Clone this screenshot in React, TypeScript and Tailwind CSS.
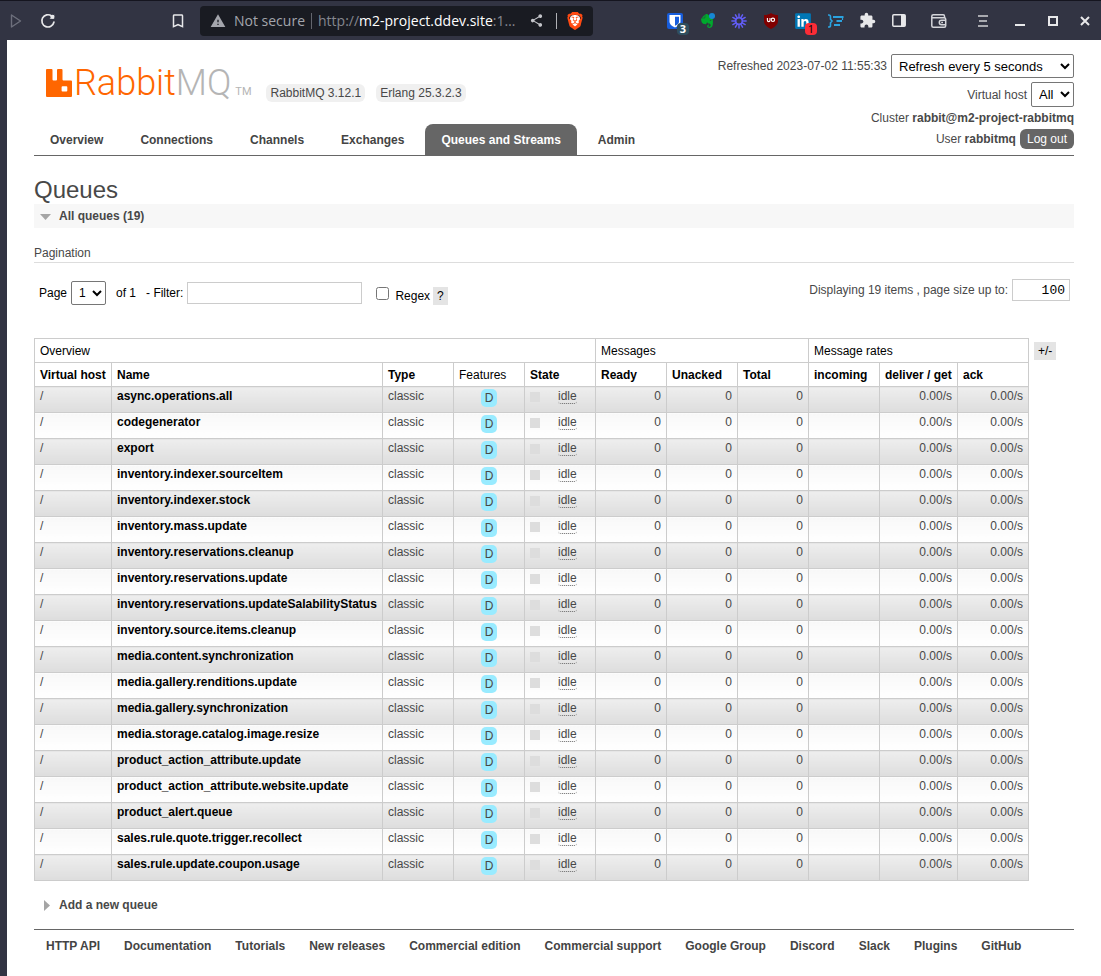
import type { ReactNode } from 'react'
import { MdBookmarkBorder, MdExtension, MdShare, MdWarning } from 'react-icons/md'
import { SiBrave, SiEvernote } from 'react-icons/si'
import { FaLinkedin } from 'react-icons/fa'

const tabs = ['Overview', 'Connections', 'Channels', 'Exchanges', 'Queues and Streams', 'Admin']

const queues = [
    'async.operations.all',
    'codegenerator',
    'export',
    'inventory.indexer.sourceItem',
    'inventory.indexer.stock',
    'inventory.mass.update',
    'inventory.reservations.cleanup',
    'inventory.reservations.update',
    'inventory.reservations.updateSalabilityStatus',
    'inventory.source.items.cleanup',
    'media.content.synchronization',
    'media.gallery.renditions.update',
    'media.gallery.synchronization',
    'media.storage.catalog.image.resize',
    'product_action_attribute.update',
    'product_action_attribute.website.update',
    'product_alert.queue',
    'sales.rule.quote.trigger.recollect',
    'sales.rule.update.coupon.usage',
]

const footerLinks = [
    'HTTP API',
    'Documentation',
    'Tutorials',
    'New releases',
    'Commercial edition',
    'Commercial support',
    'Google Group',
    'Discord',
    'Slack',
    'Plugins',
    'GitHub',
]

const spokes = [0, 30, 60, 90, 120, 150, 180, 210, 240, 270, 300, 330]

function BarButton({ label, className = 'w-8', children }: { label: string; className?: string; children: ReactNode }) {
    return (
        <button type="button" aria-label={label} className={`relative flex h-8 shrink-0 items-center justify-center ${className}`}>
            {children}
        </button>
    )
}

function BrowserBar() {
    return (
        <div className="flex h-10 items-center border-t border-[#15151f] bg-[#323443] text-[#e8e8ea]">
            <div className="flex w-[200px] shrink-0 items-center">
                <BarButton label="Forward">
                    <svg width="12" height="16" viewBox="0 0 12 16" fill="none" stroke="#6d6f7c" strokeWidth="1.4">
                        <path d="M1.5 2v12L10.5 8z" strokeLinejoin="round" />
                    </svg>
                </BarButton>
                <BarButton label="Reload">
                    <svg width="16" height="16" viewBox="0 0 16 16" fill="none" stroke="currentColor" strokeWidth="1.7">
                        <path d="M13.9 9.2A6.1 6.1 0 1 1 11.6 3" strokeLinecap="round" />
                        <path d="M9.6 5.8h4.6V1.6z" fill="currentColor" stroke="none" />
                        <circle cx="12.4" cy="3.8" r="2" fill="currentColor" stroke="none" />
                    </svg>
                </BarButton>
                <BarButton label="Bookmark" className="ml-auto mr-1.5 w-8">
                    <MdBookmarkBorder size={18} />
                </BarButton>
            </div>
            <div className="flex h-[30px] max-w-[393px] flex-1 items-center rounded bg-[#191b22] pl-2.5 font-['Open_Sans',sans-serif] text-[14px] whitespace-nowrap">
                <MdWarning size={16} className="mr-2 shrink-0 text-[#a3a5ac]" />
                <span className="text-[#a3a5ac]">Not secure</span>
                <span className="mx-1.5 h-4 w-px bg-[#63656d]" />
                <span className="text-[#85878f]">
                    http://<span className="text-white">m2-project.ddev.site</span>:1…
                </span>
                <button type="button" aria-label="Share" className="ml-auto text-[#c4c5ca]">
                    <MdShare size={15} />
                </button>
                <span className="mr-2 ml-3 h-4 w-px shrink-0 bg-[#b0b1b6]" />
                <button type="button" aria-label="Brave Shields" className="relative mr-2 flex w-5 items-center justify-center">
                    <span className="absolute h-3 w-2.5 rounded-sm bg-white" />
                    <SiBrave size={18} color="#ff4a12" className="relative" />
                </button>
            </div>
            <div className="ml-auto flex items-center">
                <BarButton label="Bitwarden">
                    <svg width="16" height="16" viewBox="0 0 16 16">
                        <rect width="16" height="16" rx="2" fill="#175ddc" />
                        <path d="M2.5 2h11v6.500c0 3-3 5-5.500 6-2.500-1-5.500-3-5.500-6z" fill="#fff" />
                        <path d="M8 3.700h4v5c0 1.600-1.800 3-4 4z" fill="#175ddc" />
                    </svg>
                    <span className="absolute right-0.5 bottom-0.5 h-3 w-3 rounded-sm bg-[#2f4f5f] text-center font-['Open_Sans',sans-serif] text-[11px] leading-3 font-bold text-white">
                        3
                    </span>
                </BarButton>
                <BarButton label="Evernote">
                    <SiEvernote size={14} color="#00a82d" />
                    <span className="absolute top-2 right-2 h-1.5 w-1.5 rounded-full bg-[#1788d4]" />
                </BarButton>
                <BarButton label="Loom">
                    <svg width="16" height="16" viewBox="0 0 16 16" stroke="#625df5" strokeWidth="1.5" strokeLinecap="round">
                        {spokes.map((angle) => (
                            <path key={angle} d="M8 .9v3.600" transform={`rotate(${angle} 8 8)`} />
                        ))}
                        <circle cx="8" cy="8" r="3.300" fill="none" strokeWidth="1.600" />
                    </svg>
                </BarButton>
                <BarButton label="uBlock Origin">
                    <svg width="14" height="16" viewBox="0 0 14 16">
                        <path d="M7 0c2 1.500 4 2 7 2v6c0 3.500-3 6-7 8-4-2-7-4.500-7-8V2c3 0 5-.5 7-2z" fill="#800000" />
                        <path d="M3.400 5v2.300a1.300 1.300 0 0 0 2.600 0V5" fill="none" stroke="#fff" strokeWidth="1.100" />
                        <circle cx="8.900" cy="6.800" r="1.700" fill="none" stroke="#fff" strokeWidth="1.100" />
                    </svg>
                </BarButton>
                <BarButton label="LinkedIn">
                    <span className="absolute h-3 w-3 bg-white" />
                    <FaLinkedin size={18} color="#0077b5" className="relative" />
                    <span className="absolute right-0.5 bottom-0.5 h-3 w-3 rounded-sm bg-[#fb2c36] text-center font-['Open_Sans',sans-serif] text-[11px] leading-3 text-black">
                        1
                    </span>
                </BarButton>
                <BarButton label="Snippets">
                    <svg width="17" height="14" viewBox="0 0 17 14" fill="none" stroke="#2ba3e0" strokeWidth="2">
                        <path d="M1 1h.8c1.200 0 1.700.6 1.700 1.800v2.400L5 7 3.500 8.800v2.400c0 1.200-.5 1.800-1.700 1.800H1" strokeWidth="1.600" />
                        <path d="M6 3h10.500M9.500 7H15M7 11h6" />
                        <path d="M15.500 3v3" strokeWidth="1.200" />
                    </svg>
                </BarButton>
                <BarButton label="Extensions">
                    <MdExtension size={17} />
                </BarButton>
                <BarButton label="Sidebar">
                    <svg width="14" height="13" viewBox="0 0 14 13">
                        <rect x=".8" y=".8" width="12.400" height="11.400" rx="1" fill="none" stroke="currentColor" strokeWidth="1.500" />
                        <path d="M9 1h4v11H9z" fill="currentColor" />
                    </svg>
                </BarButton>
                <BarButton label="Wallet" className="w-12">
                    <svg width="16" height="14" viewBox="0 0 16 14" fill="none" stroke="#d4d5da" strokeWidth="1.500">
                        <path d="M13.500 3.500V2.300c0-.8-.5-1.500-1.300-1.500H2.300C1.400.8.800 1.500.8 2.300v9.400c0 .8.600 1.500 1.500 1.500h10.900c.8 0 1.500-.7 1.500-1.500V5.200c0-.8-.7-1.500-1.500-1.500H1" />
                        <path d="M15 6.300h-4.500a2.200 2.200 0 0 0 0 4.400H15M10.200 8.500h1.800" />
                    </svg>
                </BarButton>
                <BarButton label="Menu" className="w-10">
                    <svg width="10" height="12" viewBox="0 0 10 12" stroke="#cfd0d4" strokeWidth="1.500">
                        <path d="M0 1h10M1 6h8M0 11h10" />
                    </svg>
                </BarButton>
                <BarButton label="Minimize" className="w-[34px]">
                    <svg width="10" height="12" viewBox="0 0 10 12" stroke="currentColor" strokeWidth="2">
                        <path d="M0 10h10" />
                    </svg>
                </BarButton>
                <BarButton label="Maximize">
                    <svg width="10" height="10" viewBox="0 0 10 10" fill="none" stroke="currentColor" strokeWidth="2">
                        <path d="M1 1h8v8H1z" />
                    </svg>
                </BarButton>
                <BarButton label="Close">
                    <svg width="10" height="10" viewBox="0 0 10 10" stroke="currentColor" strokeWidth="2">
                        <path d="M1 1l8 8M9 1L1 9" />
                    </svg>
                </BarButton>
            </div>
        </div>
    )
}

function Logo() {
    return (
        <a href="#/" className="flex items-end pl-3">
            <svg width="26" height="28" viewBox="0 0 26 28" className="mb-[7px]">
                <path
                    fillRule="evenodd"
                    fill="#ff6600"
                    d="M1 0h4.500q1 0 1 1v9.500q0 1 1 1h2.500q1 0 1-1V1q0-1 1-1h3.500q1 0 1 1v9.500q0 1 1 1H25q1 0 1 1V27q0 1-1 1H1q-1 0-1-1V1q0-1 1-1zM16.500 17.300q-.9 0-.9.900v3.400q0 .9.900.9h3.900q.9 0 .9-.9v-3.400q0-.9-.9-.9z"
                />
            </svg>
            <span className="ml-0.5 font-[Roboto,sans-serif] text-[36px] leading-[42px] font-light text-[#ff6600]">
                Rabbit<span className="text-[#b5b5b5]">MQ</span>
            </span>
            <span className="ml-1 pb-1 font-[Roboto,sans-serif] text-[11px] text-[#b5b5b5]">TM</span>
        </a>
    )
}

function Header() {
    return (
        <header className="flex justify-between border-b border-[#666]">
            <div className="flex flex-col justify-between">
                <div className="flex items-end pt-[22px]">
                    <Logo />
                    <div className="mb-0.5 ml-[15px] flex gap-[11px]">
                        <span className="rounded-md bg-[#f0f0f0] px-1 leading-[18px]">RabbitMQ 3.12.1</span>
                        <span className="rounded-md bg-[#f0f0f0] px-1 leading-[18px]">Erlang 25.3.2.3</span>
                    </div>
                </div>
                <nav className="flex gap-[5px]">
                    {tabs.map((tab) => (
                        <a
                            key={tab}
                            href="#/"
                            className={`rounded-t-lg px-4 pt-px leading-[30px] font-bold whitespace-nowrap ${
                                tab === 'Queues and Streams' ? 'bg-[#666] text-white' : 'text-[#444]'
                            }`}
                        >
                            {tab}
                        </a>
                    ))}
                </nav>
            </div>
            <div className="flex flex-col items-end pt-3.5 pb-1.5 whitespace-nowrap">
                <label className="flex items-center gap-1">
                    Refreshed 2023-07-02 11:55:33
                    <select className="h-6 w-[183px] rounded-xs border border-[#767676] bg-white px-[3px] text-[13px] text-black">
                        <option>Refresh every 5 seconds</option>
                    </select>
                </label>
                <label className="mt-1 flex items-center gap-1">
                    Virtual host
                    <select className="h-[25px] rounded-xs border border-[#767676] bg-white px-[3px] text-[13px] text-black">
                        <option>All</option>
                    </select>
                </label>
                <p className="leading-[22px]">
                    Cluster <b>rabbit@m2-project-rabbitmq</b>
                </p>
                <div className="flex items-center gap-1">
                    <span>
                        User <b>rabbitmq</b>
                    </span>
                    <button type="button" className="h-5 rounded-md bg-[#666] px-[7px] text-white">
                        Log out
                    </button>
                </div>
            </div>
        </header>
    )
}

function Pagination() {
    return (
        <section>
            <h3 className="mt-4 border-b border-[#ddd] leading-[18px]">Pagination</h3>
            <div className="flex items-start justify-between pt-4 pr-1 pl-[5px]">
                <div className="flex items-center pt-0.5 text-black">
                    <label className="flex items-center gap-1">
                        Page
                        <select className="h-6 rounded-xs border border-[#767676] bg-white px-[3px] text-[12px]">
                            <option>1</option>
                        </select>
                    </label>
                    <span className="ml-2.5">of 1</span>
                    <label className="ml-2.5 flex items-center gap-1">
                        - Filter:
                        <input type="text" className="h-[22px] w-[175px] border border-[#ccc] px-1" />
                    </label>
                    <label className="ml-3.5 flex items-center gap-1.5">
                        <input type="checkbox" className="h-[13px] w-[13px]" />
                        <span className="pt-1.5">Regex</span>
                    </label>
                    <button type="button" className="mt-1.5 ml-[3px] h-[18px] bg-[#e4e4e4] px-1">
                        ?
                    </button>
                </div>
                <label className="flex items-center gap-1">
                    Displaying 19 items , page size up to:
                    <input
                        type="text"
                        defaultValue="100"
                        className="h-[22px] w-[58px] border border-[#ccc] px-1 text-right font-['Liberation_Mono',monospace] text-[13px] text-black"
                    />
                </label>
            </div>
        </section>
    )
}

const th = 'h-6 border border-[#ccc] px-[5px] text-left'
const td = 'h-[26px] border border-[#ccc] px-[5px] pt-0.5 align-top leading-[14px]'

function QueueTable() {
    return (
        <div className="mt-[33px] flex items-start gap-[5px]">
            <table className="border-collapse whitespace-nowrap">
                <colgroup>
                    <col className="w-[77px]" />
                    <col className="w-[271px]" />
                    <col className="w-[71px]" />
                    <col className="w-[71px]" />
                    <col className="w-[71px]" />
                    <col className="w-[71px]" />
                    <col className="w-[71px]" />
                    <col className="w-[71px]" />
                    <col className="w-[71px]" />
                    <col className="w-[78px]" />
                    <col className="w-[71px]" />
                </colgroup>
                <thead className="text-black">
                    <tr>
                        <th colSpan={5} className={`${th} font-normal`}>Overview</th>
                        <th colSpan={3} className={`${th} font-normal`}>Messages</th>
                        <th colSpan={3} className={`${th} font-normal`}>Message rates</th>
                    </tr>
                    <tr>
                        <th className={th}>Virtual host</th>
                        <th className={th}>Name</th>
                        <th className={th}>Type</th>
                        <th className={`${th} font-normal`}>Features</th>
                        <th className={th}>State</th>
                        <th className={th}>Ready</th>
                        <th className={th}>Unacked</th>
                        <th className={th}>Total</th>
                        <th className={th}>incoming</th>
                        <th className={th}>deliver / get</th>
                        <th className={th}>ack</th>
                    </tr>
                </thead>
                <tbody>
                    {queues.map((name, i) => {
                        const cell = `${td} bg-linear-to-b ${i % 2 === 0 ? 'from-[#eee] to-[#ddd]' : 'from-[#f8f8f8] to-white'}`
                        return (
                            <tr key={name}>
                                <td className={cell}>/</td>
                                <td className={cell}>
                                    <a href="#/queues" className="font-bold text-black">{name}</a>
                                </td>
                                <td className={cell}>classic</td>
                                <td className={`${cell} text-center`}>
                                    <abbr className="inline-block rounded-[5px] bg-[#99ebff] px-1 leading-[18px] no-underline">D</abbr>
                                </td>
                                <td className={cell}>
                                    <div className="flex items-center">
                                        <span className="h-2.5 w-2.5 bg-[#ddd]" />
                                        <span className="ml-[18px] rounded-[3px] border-b border-dotted border-[#666]">idle</span>
                                    </div>
                                </td>
                                <td className={`${cell} text-right`}>0</td>
                                <td className={`${cell} text-right`}>0</td>
                                <td className={`${cell} text-right`}>0</td>
                                <td className={cell} />
                                <td className={`${cell} text-right`}>0.00/s</td>
                                <td className={`${cell} text-right`}>0.00/s</td>
                            </tr>
                        )
                    })}
                </tbody>
            </table>
            <button type="button" className="mt-1 h-[18px] bg-[#e4e4e4] px-1 text-black">
                +/-
            </button>
        </div>
    )
}

export default function App() {
    return (
        <div className="flex min-h-screen flex-col bg-white font-['Liberation_Sans',Arial,sans-serif] text-[12px] leading-4 text-[#484848]">
            <BrowserBar />
            <div className="flex-1 border-l-[7px] border-[#323443] px-[27px]">
                <Header />
                <main>
                    <h1 className="pt-5 text-[24px] leading-7">Queues</h1>
                    <h2 className="flex h-6 items-center gap-2 bg-[#f7f7f7] pl-1.5 font-bold">
                        <svg width="11" height="6" viewBox="0 0 11 6" className="mt-0.5">
                            <path d="M0 0h11L5.500 6z" fill="#a5a5a5" />
                        </svg>
                        All queues (19)
                    </h2>
                    <Pagination />
                    <QueueTable />
                    <h2 className="mt-3 flex h-6 items-center gap-[9px] pl-2.5 font-bold">
                        <svg width="6" height="11" viewBox="0 0 6 11">
                            <path d="M0 0v11l6-5.500z" fill="#a5a5a5" />
                        </svg>
                        Add a new queue
                    </h2>
                </main>
                <footer className="mt-3 flex gap-6 border-t border-[#666] px-3 pt-2 font-bold whitespace-nowrap text-[#444]">
                    {footerLinks.map((link) => (
                        <a key={link} href="#/">{link}</a>
                    ))}
                </footer>
            </div>
        </div>
    )
}
